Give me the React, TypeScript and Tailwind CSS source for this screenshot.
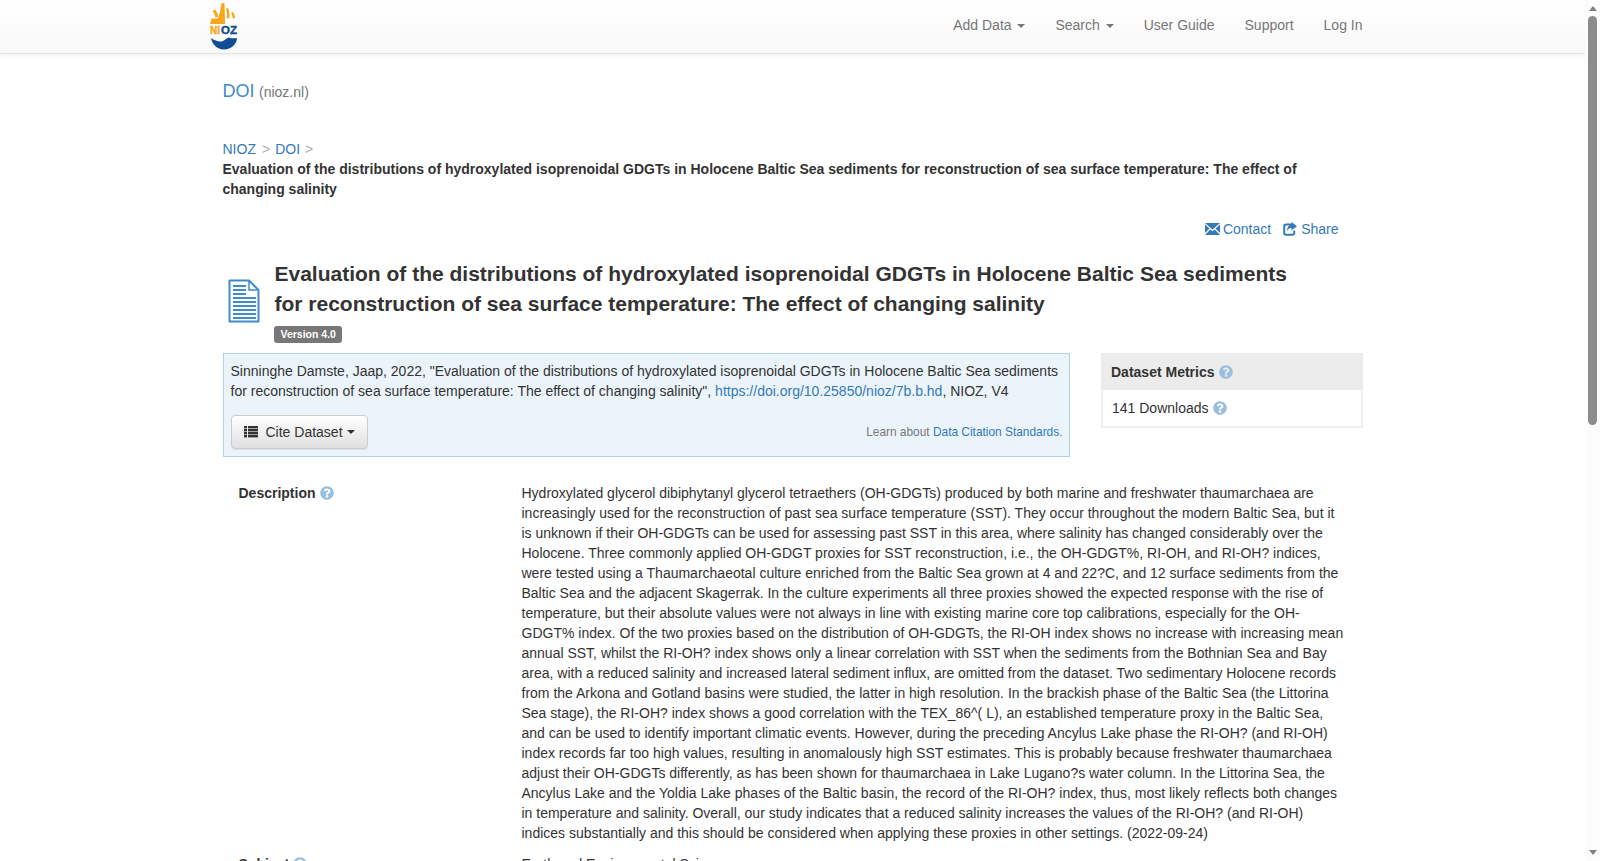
import { FaQuestionCircle } from 'react-icons/fa'

const link = 'text-[#337ab7]'

function Caret() {
  return <span className="ml-0.5 inline-block h-0 w-0 border-x-4 border-t-4 border-x-transparent border-t-current align-middle" />
}

function Help({ className = '' }: { className?: string }) {
  return <FaQuestionCircle className={`inline-block size-[14px] text-[#99bfe0] ${className}`} />
}

function Logo() {
  return (
    <svg width="28" height="48" viewBox="0 0 28 48" className="block">
      <path d="M0 21 L1.5 15.5 L8 15.5 C9 12 10.5 8 11 3 L11.5 .3 L14.5 0 L15 21 Z" fill="#f5a81c" />
      <path d="M2.5 8 L5 6.5 C7 9 8 11.5 8.5 14 L5.5 14.5 C5 12 4 10 2.5 8 Z" fill="#f5a81c" />
      <path d="M16 5.5 L18 5 C19.5 8 19.8 11 19.3 15.3 L16.8 15.3 C17.2 12 17 8.5 16 5.5 Z" fill="#f5a81c" />
      <path d="M21 10 L23 9 C24.5 11 25 13 25 15.3 L22.5 15.3 C22.7 13.5 22 11.5 21 10 Z" fill="#f5a81c" />
      <text x="0" y="31.3" fontFamily="Liberation Sans, sans-serif" fontWeight="700" fontSize="11" textLength="10" lengthAdjust="spacingAndGlyphs" fill="#f5a81c" stroke="#f5a81c" strokeWidth="0.4">NI</text>
      <text x="11" y="31.3" fontFamily="Liberation Sans, sans-serif" fontWeight="700" fontSize="11" textLength="16" lengthAdjust="spacingAndGlyphs" fill="#0f4c92" stroke="#0f4c92" strokeWidth="0.4">OZ</text>
      <path d="M1 35 C5 38 10 39.5 13 38 C15 37 17 34.5 19 34.5 C21 35.5 24 35.5 27 35 C27 41 21 46.5 14 46.5 C7 46.5 2 41 1 35 Z" fill="#0f4c92" />
    </svg>
  )
}

function DocIcon() {
  return (
    <svg width="32" height="44" viewBox="0 0 32 44" className="block">
      <path d="M1.5 1.5 H21 L30.5 11 V42.5 H1.5 Z" fill="#fff" stroke="#428bca" strokeWidth="2" strokeLinejoin="round" />
      <path d="M21 1.5 V11 H30.5" fill="none" stroke="#428bca" strokeWidth="1.5" />
      {[6, 10, 14].map((y) => <rect key={y} x="5" y={y} width="13" height="2" fill="#428bca" />)}
      {[18, 22, 26, 30, 34, 38].map((y) => <rect key={y} x="5" y={y} width="23" height="2" fill="#428bca" />)}
    </svg>
  )
}

function MailIcon() {
  return (
    <svg width="15" height="12" viewBox="0 0 15 12" className="inline-block" fill="#337ab7">
      <path d="M0 0 H15 L7.5 6.5 Z" />
      <path d="M0 1.5 L4.5 5.5 L0 10 Z" />
      <path d="M15 1.5 L10.5 5.5 L15 10 Z" />
      <path d="M0 12 L5.3 6.4 L7.5 8.2 L9.7 6.4 L15 12 Z" />
    </svg>
  )
}

function ShareIcon() {
  return (
    <svg width="14" height="14" viewBox="0 0 14 14" className="inline-block">
      <path d="M9 2.5 H3 C2 2.5 1.2 3.2 1.2 4.2 V11 C1.2 12 2 12.8 3 12.8 H9.5 C10.5 12.8 11.2 12 11.2 11 V8.5" fill="none" stroke="#337ab7" strokeWidth="2" />
      <path d="M8.5 0 L14 4.2 L8.5 8.5 V6 C6.5 6 5 7 4 9 C4 5.5 6 3 8.5 2.6 Z" fill="#337ab7" />
    </svg>
  )
}

function ListIcon() {
  return (
    <svg width="14" height="12" viewBox="0 0 14 12" className="inline-block" fill="#333">
      {[0, 3, 6, 9].map((y) => (
        <g key={y}>
          <rect x="0" y={y} width="3" height="2.4" />
          <rect x="4" y={y} width="10" height="2.4" />
        </g>
      ))}
    </svg>
  )
}

function Navbar() {
  return (
    <nav className="h-[54px] border-b border-[#e3e3e3] bg-gradient-to-b from-white to-[#f8f8f8] shadow-[0_1px_5px_rgba(0,0,0,0.075)]">
      <div className="mx-auto flex w-[1170px] items-start justify-between pr-0">
        <div className="ml-[2.5px] pt-[3px]"><Logo /></div>
        <ul className="flex text-[#777]">
          <li className="px-[15px] py-[15px]">Add Data <Caret /></li>
          <li className="px-[15px] py-[15px]">Search <Caret /></li>
          <li className="px-[15px] py-[15px]">User Guide</li>
          <li className="px-[15px] py-[15px]">Support</li>
          <li className="px-[15px] py-[15px]">Log In</li>
        </ul>
      </div>
    </nav>
  )
}

function Header() {
  return (
    <>
      <div className="flex h-[30px] items-baseline pt-[3px]">
        <span className="text-[18px] leading-[24px] text-[#428bca]">DOI</span>
        <span className="ml-[4.5px] text-[#777]">(nioz.nl)</span>
      </div>
      <div className="mt-[33px]">
        <span className={link}>NIOZ</span>
        <span className="pl-[6px] pr-[5px] text-[#b0b0b0]">&gt;</span>
        <span className={link}>DOI</span>
        <span className="pl-[5px] text-[#b0b0b0]">&gt;</span>
      </div>
      <p className="font-bold">
        Evaluation of the distributions of hydroxylated isoprenoidal GDGTs in Holocene Baltic Sea sediments for reconstruction of sea surface temperature: The effect of changing salinity
      </p>
      <div className={`mt-[20px] flex justify-end gap-[12px] pr-[24px] ${link}`}>
        <span className="flex items-center gap-[3px]"><MailIcon /><span>Contact</span></span>
        <span className="flex items-center gap-[4px]"><ShareIcon /><span>Share</span></span>
      </div>
    </>
  )
}

function Title() {
  return (
    <div className="mt-[20px] flex">
      <div className="w-[52px] shrink-0 pl-[5px] pt-[20px]"><DocIcon /></div>
      <div>
        <h1 className="w-[1040px] text-[21px] font-bold leading-[30px]">
          Evaluation of the distributions of hydroxylated isoprenoidal GDGTs in Holocene Baltic Sea sediments for reconstruction of sea surface temperature: The effect of changing salinity
        </h1>
        <span className="-ml-[0.5px] mt-[7px] inline-block rounded-[3px] bg-[#777] px-[6.5px] py-[2px] align-top text-[10.5px] font-bold leading-[13px] text-white">
          Version 4.0
        </span>
      </div>
    </div>
  )
}

function Citation() {
  return (
    <div className="h-[104px] w-[847px] border border-[#a9d3e8] bg-[#ebf4fb] pl-[7px] pr-[6px] pt-[7px]">
      <p>
        Sinninghe Damste, Jaap, 2022, "Evaluation of the distributions of hydroxylated isoprenoidal GDGTs in Holocene Baltic Sea sediments for reconstruction of sea surface temperature: The effect of changing salinity", <span className={link}>https://doi.org/10.25850/nioz/7b.b.hd</span>, NIOZ, V4
      </p>
      <div className="mt-[14px] flex items-center justify-between">
        <button className="flex h-[34px] items-center rounded border border-[#ccc] bg-gradient-to-b from-white to-[#e0e0e0] px-3 shadow-[0_1px_1px_rgba(0,0,0,0.075)]">
          <ListIcon />
          <span className="ml-[8px]">Cite Dataset</span>
          <span className="ml-[2px] flex"><Caret /></span>
        </button>
        <span className="text-[11.9px] text-[#777]">
          Learn about <span className={link}>Data Citation Standards</span>.
        </span>
      </div>
    </div>
  )
}

function Metrics() {
  return (
    <div className="h-[75px] w-[262px] border-2 border-t-0 border-[#eee]">
      <div className="-mx-[2px] flex h-[37px] items-center gap-[4px] bg-[#ececec] pl-[10.5px] font-bold">
        Dataset Metrics <Help />
      </div>
      <div className="flex h-[36px] items-center gap-[4px] pl-[9.5px]">
        141 Downloads <Help />
      </div>
    </div>
  )
}

function Description() {
  return (
    <div className="mt-[26px] flex">
      <div className="w-[299px] shrink-0 pl-[16px] font-bold">
        <span className="flex items-center gap-[4px]">Description <Help /></span>
      </div>
      <p className="w-[824px]">
        Hydroxylated glycerol dibiphytanyl glycerol tetraethers (OH-GDGTs) produced by both marine and freshwater thaumarchaea are increasingly used for the reconstruction of past sea surface temperature (SST). They occur throughout the modern Baltic Sea, but it is unknown if their OH-GDGTs can be used for assessing past SST in this area, where salinity has changed considerably over the Holocene. Three commonly applied OH-GDGT proxies for SST reconstruction, i.e., the OH-GDGT%, RI-OH, and RI-OH? indices, were tested using a Thaumarchaeotal culture enriched from the Baltic Sea grown at 4 and 22?C, and 12 surface sediments from the Baltic Sea and the adjacent Skagerrak. In the culture experiments all three proxies showed the expected response with the rise of temperature, but their absolute values were not always in line with existing marine core top calibrations, especially for the OH-GDGT% index. Of the two proxies based on the distribution of OH-GDGTs, the RI-OH index shows no increase with increasing mean annual SST, whilst the RI-OH? index shows only a linear correlation with SST when the sediments from the Bothnian Sea and Bay area, with a reduced salinity and increased lateral sediment influx, are omitted from the dataset. Two sedimentary Holocene records from the Arkona and Gotland basins were studied, the latter in high resolution. In the brackish phase of the Baltic Sea (the Littorina Sea stage), the RI-OH? index shows a good correlation with the TEX_86^( L), an established temperature proxy in the Baltic Sea, and can be used to identify important climatic events. However, during the preceding Ancylus Lake phase the RI-OH? (and RI-OH) index records far too high values, resulting in anomalously high SST estimates. This is probably because freshwater thaumarchaea adjust their OH-GDGTs differently, as has been shown for thaumarchaea in Lake Lugano?s water column. In the Littorina Sea, the Ancylus Lake and the Yoldia Lake phases of the Baltic basin, the record of the RI-OH? index, thus, most likely reflects both changes in temperature and salinity. Overall, our study indicates that a reduced salinity increases the values of the RI-OH? (and RI-OH) indices substantially and this should be considered when applying these proxies in other settings. (2022-09-24)
      </p>
    </div>
  )
}

function Scrollbar() {
  return (
    <div className="flex w-[15px] shrink-0 flex-col items-center bg-[#fcfcfc] pt-[6px]">
      <div className="h-0 w-0 border-x-[4.5px] border-b-[5px] border-x-transparent border-b-[#808080]" />
      <div className="mt-[5px] h-[409px] w-[9px] rounded-[4.5px] bg-[#8c8c8c]" />
      <div className="mt-auto mb-[6px] h-0 w-0 border-x-[4.5px] border-t-[5px] border-x-transparent border-t-[#808080]" />
    </div>
  )
}

export default function App() {
  return (
    <div className="flex h-[861px] w-[1600px] overflow-hidden bg-white font-['Liberation_Sans',sans-serif] text-[14px] leading-[20px] text-[#333]">
      <div className="h-full w-[1585px] shrink-0 overflow-hidden">
        <Navbar />
        <main className="mx-auto w-[1140px] pt-[22px]">
          <Header />
          <Title />
          <div className="mt-[10px] flex justify-between">
            <Citation />
            <Metrics />
          </div>
          <Description />
          <div className="mt-[11px] flex">
            <div className="w-[299px] shrink-0 pl-[16px] font-bold">
              <span className="flex items-center gap-[4px]">Subject <Help /></span>
            </div>
            <p>Earth and Environmental Sciences</p>
          </div>
        </main>
      </div>
      <Scrollbar />
    </div>
  )
}
